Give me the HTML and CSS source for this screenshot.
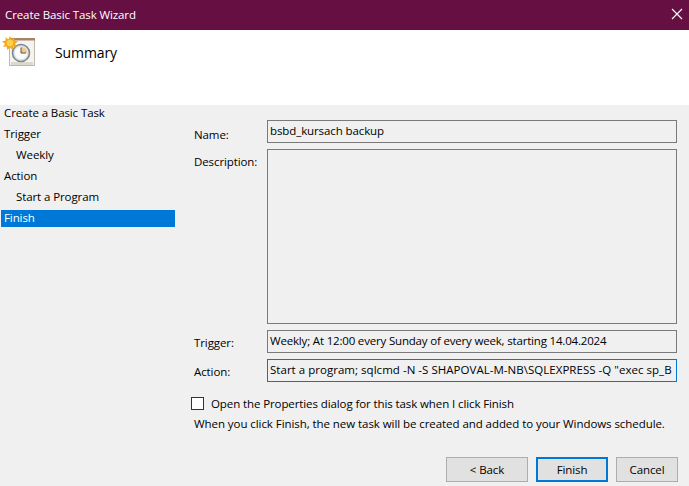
FILE: index.html
```html
<!DOCTYPE html>
<html lang="en">
<head>
  <meta charset="UTF-8">
  <title>Create Basic Task Wizard</title>
  <link rel="stylesheet" href="styles.css">
</head>
<body>

  <header class="titlebar">
    <span>Create Basic Task Wizard</span>
    <svg class="close-icon" width="12" height="12" viewBox="0 0 12 12">
      <path d="M1 1L11 11M11 1L1 11" stroke="#fff" stroke-width="1.1" fill="none"/>
    </svg>
  </header>

  <section class="banner">
    <svg class="task-icon" width="36" height="36" viewBox="0 0 36 36">
      <rect x="7.5" y="2.5" width="25" height="27" fill="#f6f4ee" stroke="#bdb9af"/>
      <rect x="9" y="26" width="22" height="3" fill="#dcd8ce"/>
      <rect x="7" y="2" width="26" height="2.5" fill="#a5836a"/>
      <circle cx="19" cy="17" r="8.5" fill="#dfe3e8" stroke="#7f8790" stroke-width="1.6"/>
      <circle cx="19" cy="17" r="6.2" fill="#fbfbf8"/>
      <path d="M19 17V10.8A6.2 6.2 0 0 1 25.2 17Z" fill="#efc98a"/>
      <path d="M19 11.5V17H24" stroke="#555" stroke-width="1" fill="none"/>
      <path d="M8 0L9.6 3.2L12.5 1.2L12.3 4.6L16 5.5L13 7.8L15 10.8L11.5 10.6L10.6 14L8 11.6L5.4 14L4.5 10.6L1 10.8L3 7.8L0 5.5L3.7 4.6L3.5 1.2L6.4 3.2Z" fill="#f5a81c"/>
      <circle cx="8" cy="7" r="3.2" fill="#fbd24e"/>
    </svg>
    <h1>Summary</h1>
  </section>

  <main class="content">
    <nav class="steps">
      <div class="step">Create a Basic Task</div>
      <div class="step">Trigger</div>
      <div class="step sub">Weekly</div>
      <div class="step">Action</div>
      <div class="step sub">Start a Program</div>
      <div class="step selected">Finish</div>
    </nav>

    <div class="panel">
      <div class="form">
        <label class="name-label">Name:</label>
        <div class="field">bsbd_kursach backup</div>
        <label>Description:</label>
        <div class="field description"></div>
        <label>Trigger:</label>
        <div class="field trigger">Weekly; At 12:00 every Sunday of every week, starting 14.04.2024</div>
        <label>Action:</label>
        <div class="field action">Start a program; sqlcmd -N -S SHAPOVAL-M-NB\SQLEXPRESS -Q "exec sp_B</div>
      </div>

      <div class="check-row">
        <span class="checkbox"></span>
        <span>Open the Properties dialog for this task when I click Finish</span>
      </div>
      <p class="note">When you click Finish, the new task will be created and added to your Windows schedule.</p>

      <div class="buttons">
        <button class="btn back">&lt; Back</button>
        <button class="btn finish">Finish</button>
        <button class="btn cancel">Cancel</button>
      </div>
    </div>
  </main>

</body>
</html>
```

FILE: styles.css
```css
html, body {
  margin: 0;
  height: 100%;
  overflow: hidden;
}

body {
  width: 689px;
  height: 486px;
  display: flex;
  flex-direction: column;
  font-family: "Open Sans", "Noto Sans", sans-serif;
  font-size: 11.5px;
  letter-spacing: -0.1px;
  color: #000;
  background-color: #f0f0f0;
}

.titlebar {
  box-sizing: border-box;
  height: 30px;
  flex: none;
  display: flex;
  justify-content: space-between;
  align-items: center;
  padding: 0 6px 2px 5px;
  background-color: #660f43;
  color: #fff;
}

.banner {
  height: 75px;
  flex: none;
  display: flex;
  align-items: flex-start;
  background-color: #fff;
}

.task-icon {
  margin: 6px 0 0 2px;
}

.banner h1 {
  margin: 13px 0 0 17px;
  font-size: 14px;
  font-weight: 400;
  line-height: 20px;
}

.content {
  flex: 1;
  display: flex;
  min-height: 0;
}

.steps {
  width: 174px;
  margin-left: 1px;
}

.step {
  height: 17px;
  margin-bottom: 4px;
  padding-left: 3px;
  line-height: 16px;
}

.step.sub {
  padding-left: 15px;
}

.step.selected {
  background-color: #0078d7;
  color: #fff;
}

.panel {
  width: 498px;
  margin-left: 15px;
  padding-top: 15px;
}

.form {
  display: grid;
  grid-template-columns: 77px 410px;
  grid-template-rows: 23px 175px 23px 23px;
  row-gap: 6px;
}

.form label {
  padding: 5px 0 0 4px;
  line-height: 16px;
}

.form .name-label {
  padding-top: 7px;
}

.field {
  box-sizing: border-box;
  border: 1px solid #7a7a7a;
  padding: 0 2px;
  line-height: 20px;
  white-space: nowrap;
  overflow: hidden;
}

.field.trigger {
  letter-spacing: -0.18px;
}

.field.action {
  border-color: #0078d7;
  letter-spacing: 0.03px;
}

.check-row {
  display: flex;
  align-items: center;
  margin: 13px 0 0 1px;
  height: 16px;
}

.checkbox {
  box-sizing: border-box;
  width: 13px;
  height: 13px;
  margin-right: 7px;
  border: 1px solid #333;
  background-color: #fff;
}

.note {
  margin: 5px 0 0 4px;
  line-height: 16px;
  white-space: nowrap;
  letter-spacing: -0.065px;
}

.buttons {
  display: flex;
  margin: 25px 0 0 256px;
}

.btn {
  box-sizing: border-box;
  flex: none;
  height: 25px;
  padding: 0;
  border: 1px solid #adadad;
  background-color: #e1e1e1;
  font: inherit;
  letter-spacing: inherit;
  color: #000;
}

.back {
  width: 82px;
  margin-right: 8px;
}

.finish {
  width: 72px;
  margin-right: 8px;
  border: 2px solid #0078d7;
}

.cancel {
  width: 62px;
}
```
